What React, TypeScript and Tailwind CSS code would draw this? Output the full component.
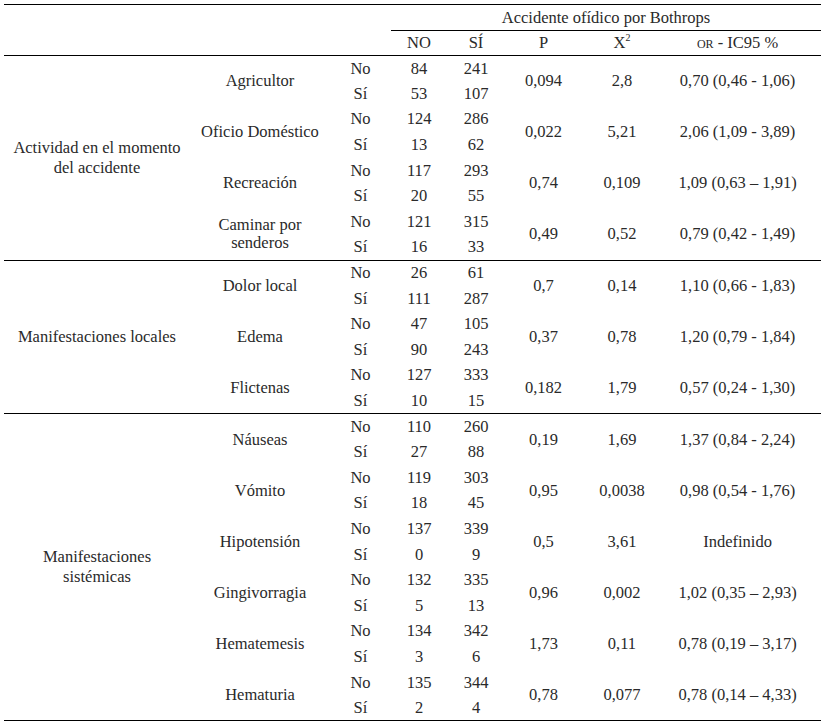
import React from 'react';

type Item = {
  name: React.ReactNode;
  no: [string, string];
  si: [string, string];
  p: string;
  x2: string;
  or: string;
};

type Group = {
  title: React.ReactNode;
  items: Item[];
};

const groups: Group[] = [
  {
    title: (
      <>
        Actividad en el momento
        <br />
        del accidente
      </>
    ),
    items: [
      { name: 'Agricultor', no: ['84', '241'], si: ['53', '107'], p: '0,094', x2: '2,8', or: '0,70 (0,46 - 1,06)' },
      { name: 'Oficio Doméstico', no: ['124', '286'], si: ['13', '62'], p: '0,022', x2: '5,21', or: '2,06 (1,09 - 3,89)' },
      { name: 'Recreación', no: ['117', '293'], si: ['20', '55'], p: '0,74', x2: '0,109', or: '1,09 (0,63 – 1,91)' },
      {
        name: (
          <>
            Caminar por
            <br />
            senderos
          </>
        ),
        no: ['121', '315'],
        si: ['16', '33'],
        p: '0,49',
        x2: '0,52',
        or: '0,79 (0,42 - 1,49)',
      },
    ],
  },
  {
    title: 'Manifestaciones locales',
    items: [
      { name: 'Dolor local', no: ['26', '61'], si: ['111', '287'], p: '0,7', x2: '0,14', or: '1,10 (0,66 - 1,83)' },
      { name: 'Edema', no: ['47', '105'], si: ['90', '243'], p: '0,37', x2: '0,78', or: '1,20 (0,79 - 1,84)' },
      { name: 'Flictenas', no: ['127', '333'], si: ['10', '15'], p: '0,182', x2: '1,79', or: '0,57 (0,24 - 1,30)' },
    ],
  },
  {
    title: (
      <>
        Manifestaciones
        <br />
        sistémicas
      </>
    ),
    items: [
      { name: 'Náuseas', no: ['110', '260'], si: ['27', '88'], p: '0,19', x2: '1,69', or: '1,37 (0,84 - 2,24)' },
      { name: 'Vómito', no: ['119', '303'], si: ['18', '45'], p: '0,95', x2: '0,0038', or: '0,98 (0,54 - 1,76)' },
      { name: 'Hipotensión', no: ['137', '339'], si: ['0', '9'], p: '0,5', x2: '3,61', or: 'Indefinido' },
      { name: 'Gingivorragia', no: ['132', '335'], si: ['5', '13'], p: '0,96', x2: '0,002', or: '1,02 (0,35 – 2,93)' },
      { name: 'Hematemesis', no: ['134', '342'], si: ['3', '6'], p: '1,73', x2: '0,11', or: '0,78 (0,19 – 3,17)' },
      { name: 'Hematuria', no: ['135', '344'], si: ['2', '4'], p: '0,78', x2: '0,077', or: '0,78 (0,14 – 4,33)' },
    ],
  },
];

export default function App() {
  return (
    <div className="bg-white min-h-screen pt-[4px] px-[4px] text-[#2a2a2a] font-['Liberation_Serif','Times_New_Roman',serif]">
      <table className="w-[817px] table-fixed border-collapse text-[16.5px] leading-[20px] font-['Liberation_Serif','Times_New_Roman',serif]">
        <colgroup>
          <col className="w-[186px]" />
          <col className="w-[140px]" />
          <col className="w-[61px]" />
          <col className="w-[56px]" />
          <col className="w-[58px]" />
          <col className="w-[77px]" />
          <col className="w-[80px]" />
          <col className="w-[159px]" />
        </colgroup>
        <thead>
          <tr className="h-[26px] border-t-[1.5px] border-black">
            <th colSpan={3}></th>
            <th colSpan={5} className="font-normal text-center border-b border-black">
              Accidente ofídico por Bothrops
            </th>
          </tr>
          <tr className="h-[25px] border-b-[1.5px] border-black">
            <th colSpan={3}></th>
            <th className="font-normal text-center">NO</th>
            <th className="font-normal text-center">SÍ</th>
            <th className="font-normal text-center">P</th>
            <th className="font-normal text-center">
              X<sup className="text-[10px] -top-[7px]">2</sup>
            </th>
            <th className="font-normal text-center pr-[8px]">
              <span className="[font-variant:small-caps]">or</span> - IC95 %
            </th>
          </tr>
        </thead>
        {groups.map((g, gi) => {
          const span = g.items.length * 2;
          return (
            <tbody key={gi} className="border-b-[1.5px] border-black">
              {g.items.map((it, ii) => (
                <React.Fragment key={ii}>
                  <tr className="h-[25.6px]">
                    {ii === 0 && (
                      <td rowSpan={span} className="text-center align-middle">
                        {g.title}
                      </td>
                    )}
                    <td rowSpan={2} className="text-center align-middle leading-[18px]">
                      {it.name}
                    </td>
                    <td className="text-center p-0">No</td>
                    <td className="text-center p-0">{it.no[0]}</td>
                    <td className="text-center p-0">{it.no[1]}</td>
                    <td rowSpan={2} className="text-center align-middle">{it.p}</td>
                    <td rowSpan={2} className="text-center align-middle">{it.x2}</td>
                    <td rowSpan={2} className="text-center align-middle pr-[8px]">{it.or}</td>
                  </tr>
                  <tr className="h-[25.6px]">
                    <td className="text-center p-0">Sí</td>
                    <td className="text-center p-0">{it.si[0]}</td>
                    <td className="text-center p-0">{it.si[1]}</td>
                  </tr>
                </React.Fragment>
              ))}
            </tbody>
          );
        })}
      </table>
    </div>
  );
}
